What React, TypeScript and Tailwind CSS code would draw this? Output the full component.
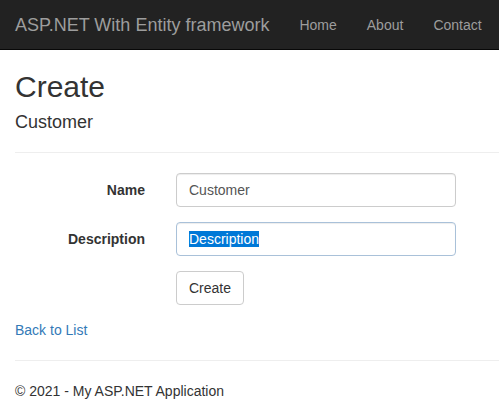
const font = 'font-["Liberation_Sans",Arial,sans-serif]'

function Navbar() {
  const links = ['Home', 'About', 'Contact']
  return (
    <nav className="flex h-[50px] items-stretch border-b border-[#080808] bg-[#222]">
      <a className="shrink-0 whitespace-nowrap px-[15px] py-[15px] text-[18px] leading-[20px] text-[#9d9d9d]">ASP.NET With Entity framework</a>
      <ul className="ml-auto mr-[3px] flex shrink-0">
        {links.map(l => (
          <li key={l}>
            <a className="block whitespace-nowrap px-[15px] py-[15px] text-[14px] leading-[20px] text-[#9d9d9d]">{l}</a>
          </li>
        ))}
      </ul>
    </nav>
  )
}

function Field({ label, value, focused }: { label: string; value: string; focused?: boolean }) {
  return (
    <div className="mb-[15px] flex">
      <label className="w-[130px] pt-[7px] text-right text-[14px] font-bold leading-[20px] text-[#333]">{label}</label>
      <div className="ml-[31px] w-[280px]">
        {focused ? (
          <div className="h-[34px] rounded-[4px] border border-[#a9c1d9] bg-white px-[12px] py-[6px] text-[14px] leading-[20px] text-[#555] shadow-[inset_0_1px_1px_rgba(0,0,0,0.075)]">
            <span className="bg-[#0078d7] text-white">{value}</span>
          </div>
        ) : (
          <input
            readOnly
            value={value}
            className="block h-[34px] w-full rounded-[4px] border border-[#ccc] bg-white px-[12px] py-[6px] text-[14px] leading-[20px] text-[#555] shadow-[inset_0_1px_1px_rgba(0,0,0,0.075)] outline-none"
          />
        )}
      </div>
    </div>
  )
}

export default function App() {
  return (
    <div className={`${font} min-h-[412px] overflow-hidden bg-white text-[14px] leading-[20px] text-[#333]`}>
      <Navbar />
      <div className="px-[15px]">
        <h2 className="mt-[20px] mb-[10px] text-[30px] leading-[33px]">Create</h2>
        <h4 className="mt-[10px] mb-[10px] text-[18px] leading-[19px]">Customer</h4>

        <hr className="my-[20px] mr-[-15px] border-t border-[#eee]" />

        {/* 입력 폼 */}
        <Field label="Name" value="Customer" />
        <Field label="Description" value="Description" focused />
        <div className="mb-[15px] flex">
          <div className="ml-[161px]">
            <button className="h-[34px] rounded-[4px] border border-[#ccc] bg-white px-[12px] py-[6px] text-[14px] leading-[20px] text-[#333]">
              Create
            </button>
          </div>
        </div>

        <div>
          <a className="text-[#337ab7]">Back to List</a>
        </div>

        <hr className="my-[20px] mr-[-15px] border-t border-[#eee]" />
        <footer>
          <p className="mb-[10px]">© 2021 - My ASP.NET Application</p>
        </footer>
      </div>
    </div>
  )
}
